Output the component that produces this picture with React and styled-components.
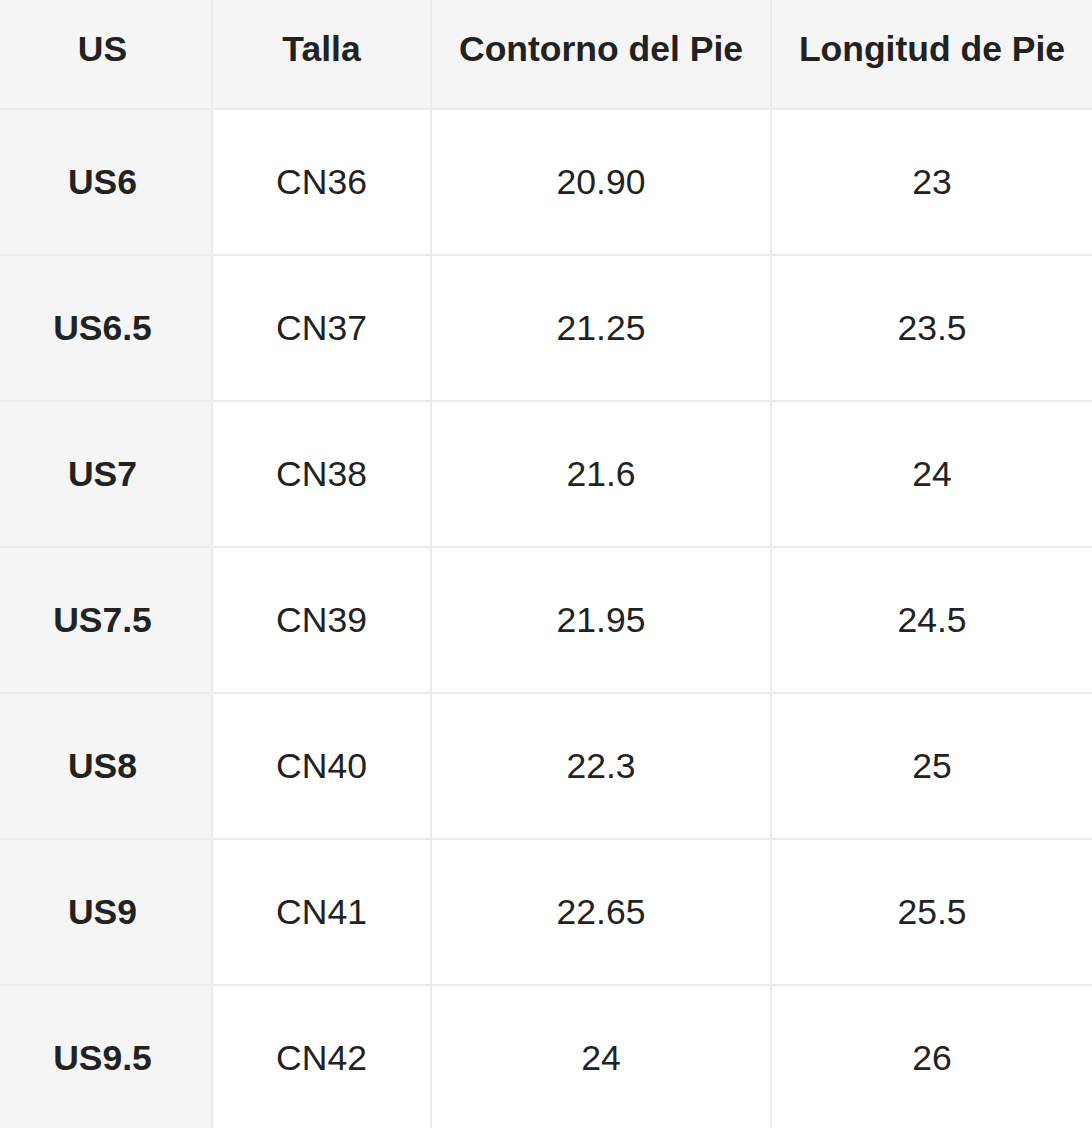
import React from "react";
import styled, { createGlobalStyle } from "styled-components";

const GlobalStyle = createGlobalStyle`
  html, body {
    margin: 0;
    padding: 0;
    background: #ffffff;
  }
  body {
    font-family: "Liberation Sans", Arial, sans-serif;
    color: #222222;
  }
`;

const headers = ["US", "Talla", "Contorno del Pie", "Longitud de Pie"];

const rows = [
  ["US6", "CN36", "20.90", "23"],
  ["US6.5", "CN37", "21.25", "23.5"],
  ["US7", "CN38", "21.6", "24"],
  ["US7.5", "CN39", "21.95", "24.5"],
  ["US8", "CN40", "22.3", "25"],
  ["US9", "CN41", "22.65", "25.5"],
  ["US9.5", "CN42", "24", "26"],
];

const SizeTable = () => {
  return (
    <Grid>
      {headers.map((h, i) => (
        <HeadCell key={h} $first={i === 0}>
          {h}
        </HeadCell>
      ))}
      {rows.map((row) =>
        row.map((value, i) => (
          <Cell key={row[0] + i} $first={i === 0}>
            {value}
          </Cell>
        ))
      )}
    </Grid>
  );
};

const App = () => {
  return (
    <>
      <GlobalStyle />
      <Page>
        <SizeTable />
      </Page>
    </>
  );
};

const Page = styled.div`
  width: 1092px;
  height: 1128px;
  overflow: hidden;
`;

const Grid = styled.div`
  display: grid;
  grid-template-columns: 211px 217px 338px 1fr;
  grid-template-rows: 108px repeat(7, 144px);
  gap: 2px;
  background: #ebebeb;
`;

const HeadCell = styled.div`
  display: flex;
  align-items: center;
  justify-content: center;
  padding-bottom: 10px;
  padding-right: ${(p) => (p.$first ? "6px" : "0")};
  background: #f5f5f5;
  font-size: 35.5px;
  font-weight: bold;
  color: #222222;
`;

const Cell = styled.div`
  display: flex;
  align-items: center;
  justify-content: center;
  padding-right: ${(p) => (p.$first ? "6px" : "0")};
  background: ${(p) => (p.$first ? "#f5f5f5" : "#ffffff")};
  font-size: 35.5px;
  font-weight: ${(p) => (p.$first ? "bold" : "normal")};
  color: #222222;
`;

export default App;
